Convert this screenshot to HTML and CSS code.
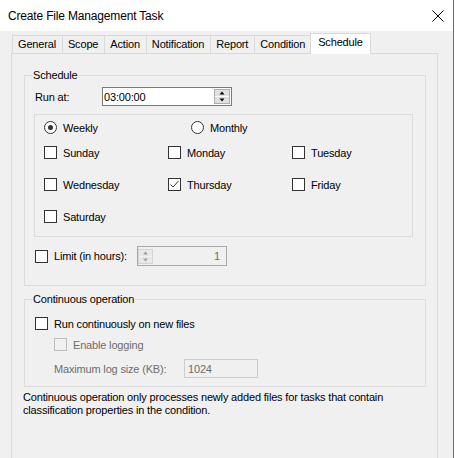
FILE: index.html
```html
<!DOCTYPE html>
<html lang="en">
<head>
  <meta charset="UTF-8">
  <meta name="viewport" content="width=device-width, initial-scale=1.0">
  <title>Create File Management Task</title>
  <link rel="stylesheet" href="styles.css">
</head>
<body>
  <div class="window">
    <div class="titlebar">
      <span class="title">Create File Management Task</span>
      <svg class="close" width="12" height="12" viewBox="0 0 12 12">
        <path d="M0.5 0.5L11.5 11.5M11.5 0.5L0.5 11.5" stroke="#000" stroke-width="1"/>
      </svg>
    </div>

    <div class="dialog">
      <div class="tabs">
        <div class="tab">General</div>
        <div class="tab">Scope</div>
        <div class="tab">Action</div>
        <div class="tab">Notification</div>
        <div class="tab">Report</div>
        <div class="tab">Condition</div>
        <div class="tab active">Schedule</div>
      </div>

      <div class="tab-page">
        <fieldset class="group schedule">
          <legend>Schedule</legend>
          <div class="run-row">
            <span class="run-label">Run at:</span>
            <div class="field time">
              <span class="value">03:00:00</span>
              <svg class="spin" width="16" height="15" viewBox="0 0 16 15">
                <rect x="0.5" y="0.5" width="15" height="14" fill="#fff" stroke="#adadad"/>
                <rect x="1" y="1" width="14" height="6" fill="#e1e1e1"/>
                <rect x="1" y="8" width="14" height="6" fill="#e1e1e1"/>
                <path d="M5.5 5.5h5l-2.5-3z" fill="#000"/>
                <path d="M5.5 9.5h5l-2.5 3z" fill="#000"/>
              </svg>
            </div>
          </div>

          <div class="days">
            <div class="freq">
              <label class="opt weekly"><span class="radio on"></span>Weekly</label>
              <label class="opt"><span class="radio"></span>Monthly</label>
            </div>
            <div class="day-grid">
              <label class="opt"><span class="check"></span>Sunday</label>
              <label class="opt"><span class="check"></span>Monday</label>
              <label class="opt"><span class="check"></span>Tuesday</label>
              <label class="opt"><span class="check"></span>Wednesday</label>
              <label class="opt">
                <span class="check">
                  <svg width="11" height="11" viewBox="0 0 11 11"><path d="M1.5 5.5L4 8L9.5 2" fill="none" stroke="#333" stroke-width="1"/></svg>
                </span>Thursday
              </label>
              <label class="opt"><span class="check"></span>Friday</label>
              <label class="opt"><span class="check"></span>Saturday</label>
            </div>
          </div>

          <div class="limit-row">
            <label class="opt limit"><span class="check"></span>Limit (in hours):</label>
            <div class="field hours">
              <svg class="spin" width="15" height="15" viewBox="0 0 15 15">
                <rect x="0.5" y="0.5" width="14" height="14" fill="#f0f0f0" stroke="#d4d4d4"/>
                <rect x="1" y="1" width="13" height="6" fill="#e8e8e8"/>
                <rect x="1" y="8" width="13" height="6" fill="#e8e8e8"/>
                <path d="M5 5.5h5l-2.5-3z" fill="#a0a0a0"/>
                <path d="M5 9.5h5l-2.5 3z" fill="#a0a0a0"/>
              </svg>
              <span class="value">1</span>
            </div>
          </div>
        </fieldset>

        <fieldset class="group continuous">
          <legend>Continuous operation</legend>
          <label class="opt"><span class="check"></span>Run continuously on new files</label>
          <label class="opt sub disabled"><span class="check"></span>Enable logging</label>
          <div class="log-row disabled">
            <span class="log-label">Maximum log size (KB):</span>
            <div class="field log-size"><span class="value">1024</span></div>
          </div>
        </fieldset>

        <p class="note">Continuous operation only processes newly added files for tasks that contain<br>classification properties in the condition.</p>
      </div>
    </div>
  </div>
</body>
</html>
```

FILE: styles.css
```css
* {
  box-sizing: border-box;
}

body {
  margin: 0;
  background: #fff;
  font-family: 'Liberation Sans', Arial, sans-serif;
  font-size: 11px;
  letter-spacing: -0.17px;
  color: #000;
}

.window {
  width: 454px;
  height: 458px;
  border-right: 1px solid #2b7bc4;
  display: flex;
  flex-direction: column;
  overflow: hidden;
}

.titlebar {
  height: 31px;
  flex-shrink: 0;
  display: flex;
  align-items: center;
  justify-content: space-between;
  padding: 1px 9px 0 8px;
  background: #fff;
  font-size: 12px;
}

.dialog {
  flex: 1;
  display: flex;
  flex-direction: column;
  background: #f0f0f0;
  padding-top: 2px;
}

/* tab strip */
.tabs {
  display: flex;
  align-items: flex-end;
  height: 20px;
  margin-left: 12px;
}

.tab {
  height: 18px;
  line-height: 17px;
  padding: 0 6px 0 5px;
  border: 1px solid #d9d9d9;
  border-bottom: none;
  margin-left: -1px;
  background: #f0f0f0;
  white-space: nowrap;
}

.tab:first-child {
  margin-left: 0;
}

.tab.active {
  position: relative;
  z-index: 1;
  height: 21px;
  line-height: 16px;
  margin: 0 -2px -1px -2px;
  padding: 0 7px;
  background: #fff;
}

.tab-page {
  flex: 1;
  margin-left: 11px;
  width: 427px;
  border: 1px solid #d9d9d9;
  border-bottom: none;
}

/* group boxes */
.group {
  width: 402px;
  margin: 14px 0 0 12px;
  padding: 5px 9px 19px;
  border: 1px solid #dcdcdc;
  min-width: 0;
}

.group legend {
  padding: 0 1px;
  margin-left: -2px;
  line-height: 14px;
}

.opt {
  display: flex;
  align-items: center;
  height: 13px;
  white-space: nowrap;
}

.check {
  width: 13px;
  height: 13px;
  flex-shrink: 0;
  margin-right: 6px;
  border: 1px solid #333;
  background: #fff;
  display: flex;
  align-items: center;
  justify-content: center;
}

.radio {
  width: 13px;
  height: 13px;
  flex-shrink: 0;
  margin-right: 6px;
  border: 1px solid #333;
  border-radius: 50%;
  background: #fff;
  display: flex;
  align-items: center;
  justify-content: center;
}

.radio.on::after {
  content: '';
  width: 5px;
  height: 5px;
  border-radius: 50%;
  background: #333;
}

.field {
  display: flex;
  align-items: center;
  background: #fff;
  border: 1px solid #7a7a7a;
}

/* run at */
.run-row {
  display: flex;
  align-items: center;
  height: 19px;
}

.run-label {
  width: 67px;
  margin-left: 1px;
}

.field.time {
  width: 130px;
  height: 19px;
  padding: 0 1px 0 1px;
}

.field .value {
  flex: 1;
}

/* weekly / monthly + days */
.days {
  width: 379px;
  margin-top: 8px;
  padding: 6px 9px 13px;
  border: 1px solid #dcdcdc;
}

.freq {
  display: flex;
}

.freq .weekly {
  width: 147px;
}

.day-grid {
  display: grid;
  grid-template-columns: 124px 124px auto;
  grid-auto-rows: 13px;
  row-gap: 19px;
  margin-top: 12px;
}

/* limit */
.limit-row {
  display: flex;
  align-items: center;
  height: 20px;
  margin-top: 9px;
}

.opt.limit {
  width: 102px;
  margin-left: 1px;
}

.field.hours {
  width: 90px;
  height: 20px;
  padding: 0 6px 0 0;
  background: #f0f0f0;
  border-color: #a9a9a9;
  color: #6d6d6d;
}

.field.hours .value {
  text-align: right;
}

/* continuous operation */
.group.continuous {
  margin-top: 6px;
  padding: 11px 9px 8px;
}

.group.continuous > .opt {
  margin-left: 1px;
}

.opt.sub {
  margin: 8px 0 0 20px !important;
}

.disabled {
  color: #6d6d6d;
}

.disabled .check {
  border-color: #bcbcbc;
  background: #f0f0f0;
}

.log-row {
  display: flex;
  align-items: center;
  height: 19px;
  margin: 8px 0 0 20px;
}

.log-label {
  width: 130px;
}

.field.log-size {
  width: 74px;
  height: 19px;
  padding-left: 3px;
  background: #f0f0f0;
  border-color: #ccc;
}

.note {
  margin: 4px 0 0 11px;
  line-height: 13px;
}
```
